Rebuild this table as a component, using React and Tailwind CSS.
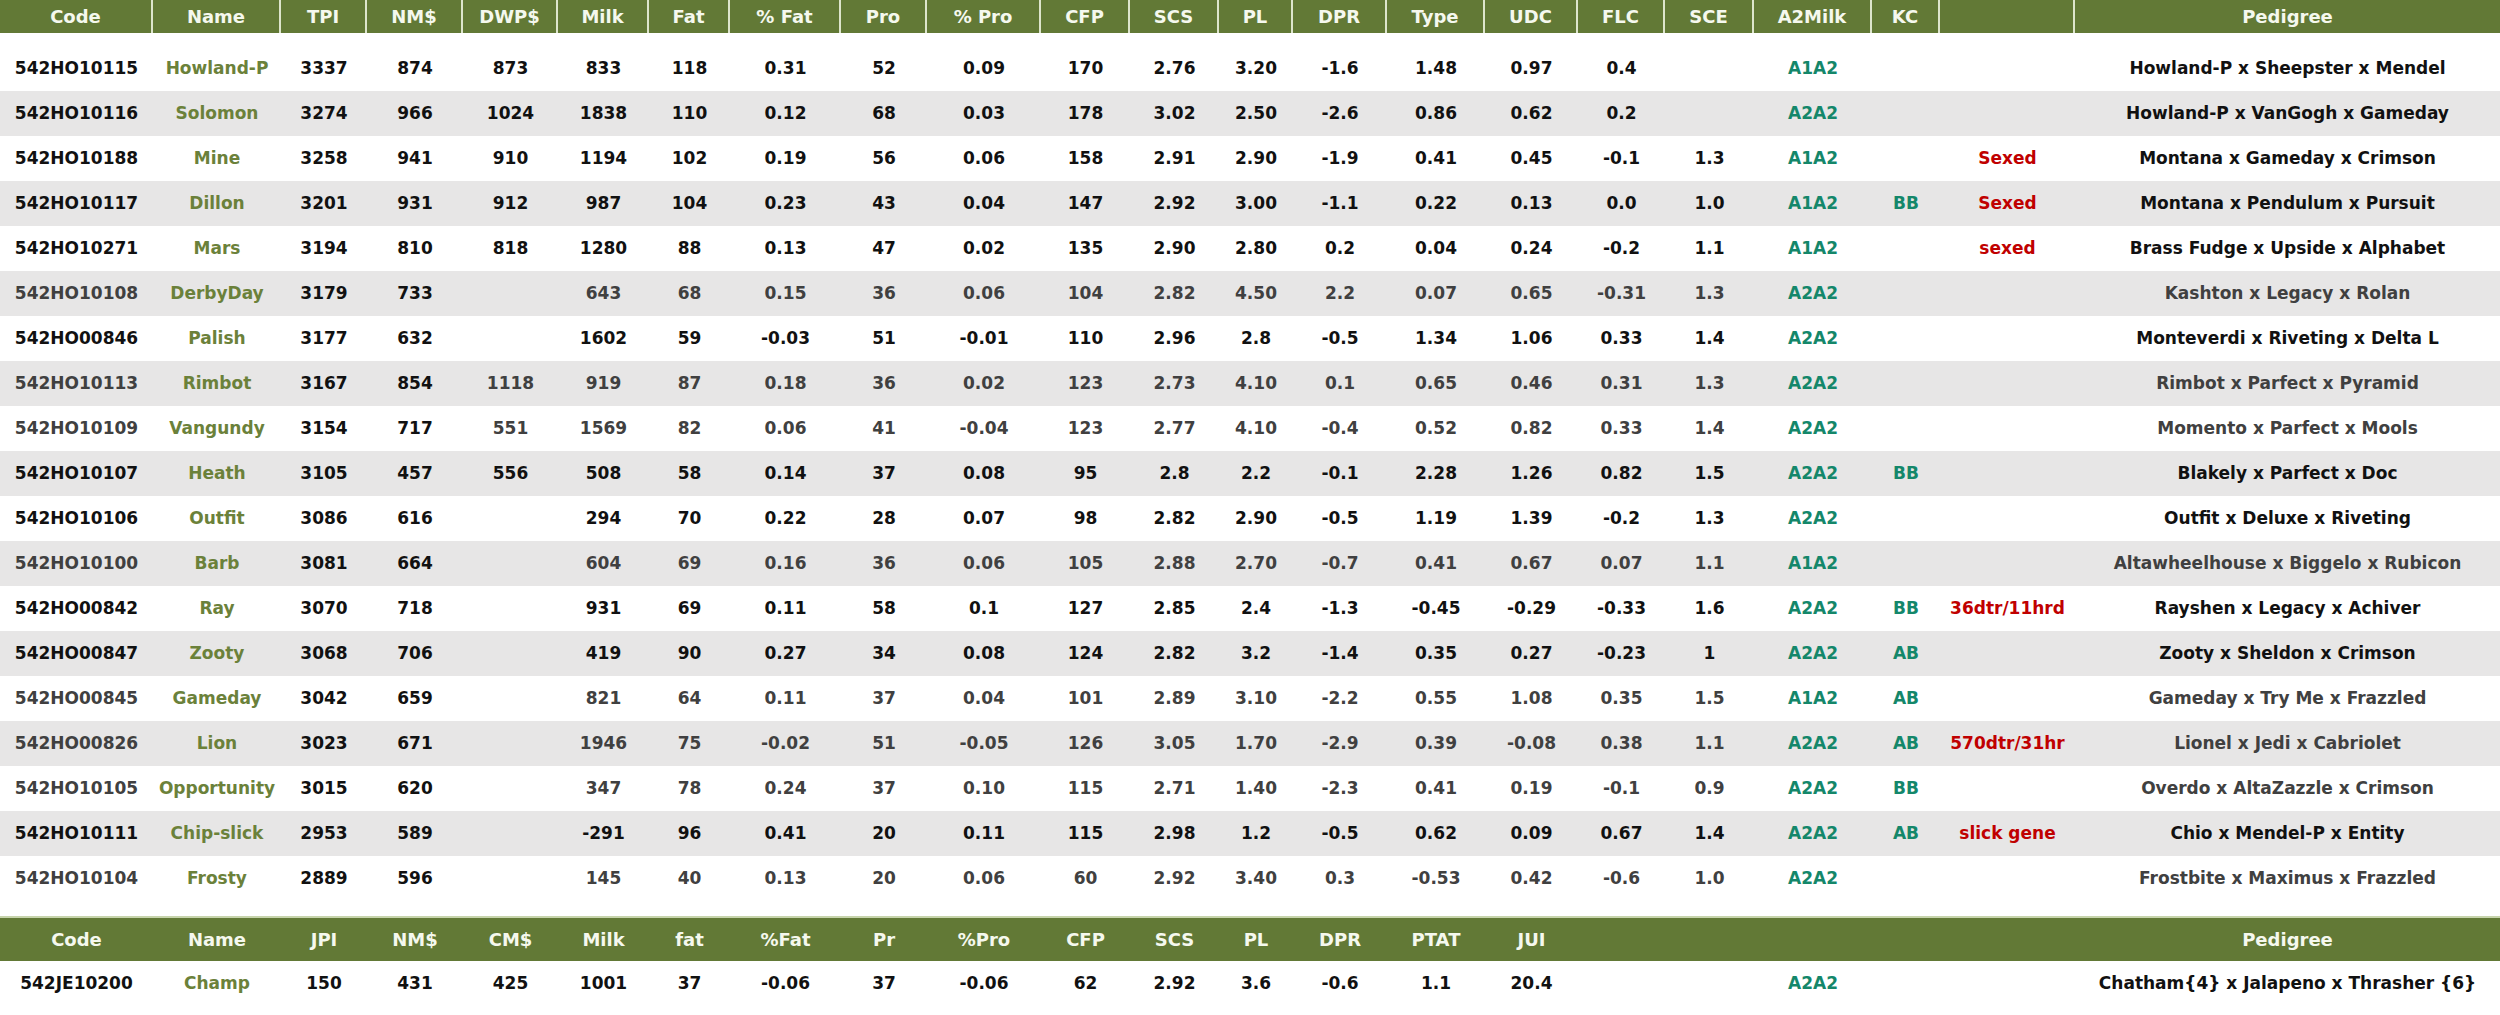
const cols =
  "grid grid-cols-[153px_128px_86px_96px_95px_91px_81px_111px_86px_114px_89px_89px_74px_94px_98px_93px_87px_89px_118px_68px_135px_1fr]";

const headOne = ["Code", "Name", "TPI", "NM$", "DWP$", "Milk", "Fat", "% Fat", "Pro", "% Pro", "CFP", "SCS", "PL", "DPR", "Type", "UDC", "FLC", "SCE", "A2Milk", "KC", "", "Pedigree"];
const headTwo = ["Code", "Name", "JPI", "NM$", "CM$", "Milk", "fat", "%Fat", "Pr", "%Pro", "CFP", "SCS", "PL", "DPR", "PTAT", "JUI", "", "", "", "", "", "Pedigree"];

// code, name, then 16 numbers, a2, kc, note, pedigree, muted
const sires = [
  ["542HO10115", "Howland-P", "3337", "874", "873", "833", "118", "0.31", "52", "0.09", "170", "2.76", "3.20", "-1.6", "1.48", "0.97", "0.4", "", "A1A2", "", "", "Howland-P x Sheepster x Mendel"],
  ["542HO10116", "Solomon", "3274", "966", "1024", "1838", "110", "0.12", "68", "0.03", "178", "3.02", "2.50", "-2.6", "0.86", "0.62", "0.2", "", "A2A2", "", "", "Howland-P x VanGogh x Gameday"],
  ["542HO10188", "Mine", "3258", "941", "910", "1194", "102", "0.19", "56", "0.06", "158", "2.91", "2.90", "-1.9", "0.41", "0.45", "-0.1", "1.3", "A1A2", "", "Sexed", "Montana x Gameday x Crimson"],
  ["542HO10117", "Dillon", "3201", "931", "912", "987", "104", "0.23", "43", "0.04", "147", "2.92", "3.00", "-1.1", "0.22", "0.13", "0.0", "1.0", "A1A2", "BB", "Sexed", "Montana x Pendulum x Pursuit"],
  ["542HO10271", "Mars", "3194", "810", "818", "1280", "88", "0.13", "47", "0.02", "135", "2.90", "2.80", "0.2", "0.04", "0.24", "-0.2", "1.1", "A1A2", "", "sexed", "Brass Fudge x Upside x Alphabet"],
  ["542HO10108", "DerbyDay", "3179", "733", "", "643", "68", "0.15", "36", "0.06", "104", "2.82", "4.50", "2.2", "0.07", "0.65", "-0.31", "1.3", "A2A2", "", "", "Kashton x Legacy x Rolan", true],
  ["542HO00846", "Palish", "3177", "632", "", "1602", "59", "-0.03", "51", "-0.01", "110", "2.96", "2.8", "-0.5", "1.34", "1.06", "0.33", "1.4", "A2A2", "", "", "Monteverdi x Riveting x Delta L"],
  ["542HO10113", "Rimbot", "3167", "854", "1118", "919", "87", "0.18", "36", "0.02", "123", "2.73", "4.10", "0.1", "0.65", "0.46", "0.31", "1.3", "A2A2", "", "", "Rimbot x Parfect x Pyramid", true],
  ["542HO10109", "Vangundy", "3154", "717", "551", "1569", "82", "0.06", "41", "-0.04", "123", "2.77", "4.10", "-0.4", "0.52", "0.82", "0.33", "1.4", "A2A2", "", "", "Momento x Parfect x Mools", true],
  ["542HO10107", "Heath", "3105", "457", "556", "508", "58", "0.14", "37", "0.08", "95", "2.8", "2.2", "-0.1", "2.28", "1.26", "0.82", "1.5", "A2A2", "BB", "", "Blakely x Parfect x Doc"],
  ["542HO10106", "Outfit", "3086", "616", "", "294", "70", "0.22", "28", "0.07", "98", "2.82", "2.90", "-0.5", "1.19", "1.39", "-0.2", "1.3", "A2A2", "", "", "Outfit x Deluxe x Riveting"],
  ["542HO10100", "Barb", "3081", "664", "", "604", "69", "0.16", "36", "0.06", "105", "2.88", "2.70", "-0.7", "0.41", "0.67", "0.07", "1.1", "A1A2", "", "", "Altawheelhouse x Biggelo x Rubicon", true],
  ["542HO00842", "Ray", "3070", "718", "", "931", "69", "0.11", "58", "0.1", "127", "2.85", "2.4", "-1.3", "-0.45", "-0.29", "-0.33", "1.6", "A2A2", "BB", "36dtr/11hrd", "Rayshen x Legacy x Achiver"],
  ["542HO00847", "Zooty", "3068", "706", "", "419", "90", "0.27", "34", "0.08", "124", "2.82", "3.2", "-1.4", "0.35", "0.27", "-0.23", "1", "A2A2", "AB", "", "Zooty x Sheldon x Crimson"],
  ["542HO00845", "Gameday", "3042", "659", "", "821", "64", "0.11", "37", "0.04", "101", "2.89", "3.10", "-2.2", "0.55", "1.08", "0.35", "1.5", "A1A2", "AB", "", "Gameday x Try Me x Frazzled", true],
  ["542HO00826", "Lion", "3023", "671", "", "1946", "75", "-0.02", "51", "-0.05", "126", "3.05", "1.70", "-2.9", "0.39", "-0.08", "0.38", "1.1", "A2A2", "AB", "570dtr/31hr", "Lionel x Jedi x Cabriolet", true],
  ["542HO10105", "Opportunity", "3015", "620", "", "347", "78", "0.24", "37", "0.10", "115", "2.71", "1.40", "-2.3", "0.41", "0.19", "-0.1", "0.9", "A2A2", "BB", "", "Overdo x AltaZazzle x Crimson", true],
  ["542HO10111", "Chip-slick", "2953", "589", "", "-291", "96", "0.41", "20", "0.11", "115", "2.98", "1.2", "-0.5", "0.62", "0.09", "0.67", "1.4", "A2A2", "AB", "slick gene", "Chio x Mendel-P x Entity"],
  ["542HO10104", "Frosty", "2889", "596", "", "145", "40", "0.13", "20", "0.06", "60", "2.92", "3.40", "0.3", "-0.53", "0.42", "-0.6", "1.0", "A2A2", "", "", "Frostbite x Maximus x Frazzled", true],
];

const jersey = ["542JE10200", "Champ", "150", "431", "425", "1001", "37", "-0.06", "37", "-0.06", "62", "2.92", "3.6", "-0.6", "1.1", "20.4", "", "", "A2A2", "", "", "Chatham{4} x Jalapeno x Thrasher {6}"];

function cellColor(i, muted) {
  if (i === 1) return "text-[#6b813a]";
  if (i === 18 || i === 19) return "text-[#14876a]";
  if (i === 20) return "text-[#c00000]";
  if (i === 2 || i === 3) return "text-[#111111]";
  return muted ? "text-[#404040]" : "text-[#111111]";
}

function Row({ data, shaded }) {
  const muted = data[22] === true;
  return (
    <div className={`${cols} h-[45px] items-center ${shaded ? "bg-[#e7e6e6]" : "bg-white"}`}>
      {data.slice(0, 22).map((v, i) => (
        <div key={i} className={`text-center whitespace-nowrap ${cellColor(i, muted)}`}>
          {v}
        </div>
      ))}
    </div>
  );
}

export default function App() {
  return (
    <div className="w-[2500px] h-[1015px] bg-white overflow-hidden font-['DejaVu_Sans',sans-serif] font-bold text-[17px]">
      {/* Holstein header */}
      <div className={`${cols} h-[33px] bg-[#627936] text-[#f5f8ee] text-[18px]`}>
        {headOne.map((h, i) => (
          <div
            key={i}
            className={`flex items-center justify-center ${i < headOne.length - 1 ? "border-r-2 border-[#dde5cc]" : ""}`}
          >
            {h}
          </div>
        ))}
      </div>

      <div className="h-[13px]" />
      {sires.map((s, i) => (
        <Row key={s[0]} data={s} shaded={i % 2 === 1} />
      ))}

      {/* Jersey section */}
      <div className="h-[15px]" />
      <div className={`${cols} h-[45px] bg-[#627936] border-t-2 border-[#c7d4ac] text-[#f5f8ee] text-[18px]`}>
        {headTwo.map((h, i) => (
          <div key={i} className="flex items-center justify-center">
            {h}
          </div>
        ))}
      </div>
      <Row data={jersey} shaded={false} />
    </div>
  );
}
